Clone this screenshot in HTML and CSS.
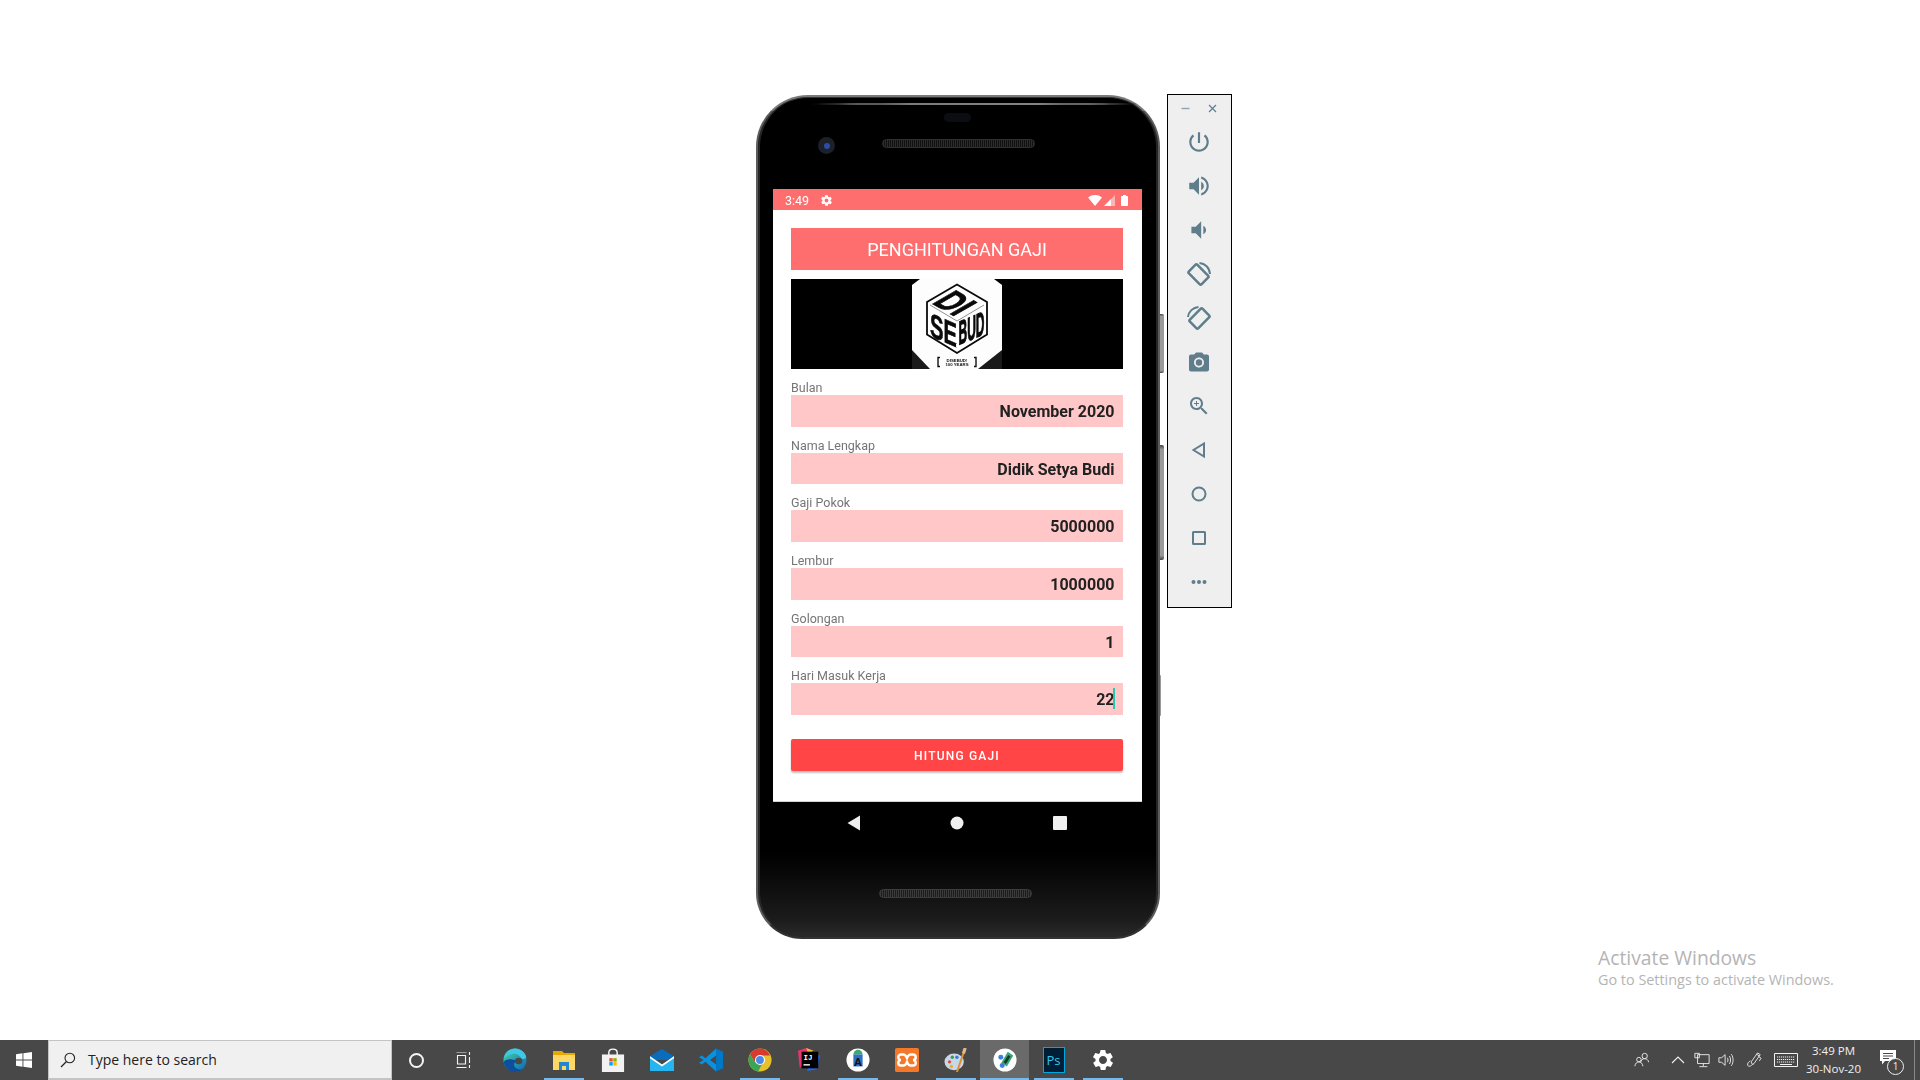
FILE: index.html
```html
<!DOCTYPE html>
<html lang="id">
<head>
<meta charset="utf-8">
<title>Penghitungan Gaji</title>
<link rel="stylesheet" href="styles.css">
</head>
<body>
<main class="desktop">
  <section class="phone">
    <span class="btn-side btn-a"></span><span class="btn-side btn-b"></span><span class="btn-side btn-c"></span>
    <div class="bezel-top">
      <span class="highlight"></span>
      <span class="sensor"></span>
      <span class="camera"><span class="lens"></span></span>
      <span class="speaker speaker-top"></span>
    </div>
    <div class="screen">
      <div class="statusbar">
        <span class="clock-mini">3:49</span>
        <svg class="gear-mini" viewBox="0 0 24 24"><path fill="#fff" d="M19.4 13c.1-.3.1-.6.1-1s0-.7-.1-1l2.100-1.600c.2-.2.2-.4.1-.6l-2-3.500c-.1-.2-.4-.3-.6-.2l-2.500 1c-.5-.4-1.100-.7-1.700-1l-.4-2.600c0-.2-.2-.4-.5-.4h-4c-.3 0-.5.2-.5.400l-.4 2.600c-.6.3-1.200.6-1.700 1l-2.500-1c-.2-.1-.5 0-.6.2l-2 3.500c-.1.200-.1.400.1.600L4.600 11c-.1.300-.1.700-.1 1s0 .7.1 1l-2.100 1.600c-.2.200-.2.400-.1.600l2 3.500c.1.200.4.300.6.200l2.500-1c.5.400 1.100.7 1.700 1l.4 2.600c0 .2.2.4.5.4h4c.3 0 .5-.2.5-.4l.4-2.600c.6-.3 1.200-.6 1.700-1l2.500 1c.2.100.5 0 .6-.2l2-3.500c.1-.2.1-.4-.1-.6L19.400 13zM12 15.500c-1.900 0-3.500-1.600-3.500-3.500s1.600-3.500 3.500-3.500 3.500 1.600 3.500 3.500-1.600 3.500-3.500 3.500z"/></svg>
        <span class="status-right">
          <svg class="st-wifi" viewBox="0 0 14 11"><path fill="#fff" d="M0 2.500C2 .8 4.400 0 7 0s5 .8 7 2.500L7 11z"/></svg>
          <svg class="st-signal" viewBox="0 0 11 11"><path fill="#ffb4b4" d="M11 0v11H0z"/><path fill="#fff" d="M7 4v7H0z"/></svg>
          <svg class="st-batt" viewBox="0 0 7 11"><path fill="#fff" d="M2 0h3v1h1.200c.4 0 .8.300.8.800v8.400c0 .4-.4.800-.8.800H.800C.4 11 0 10.600 0 10.200V1.800C0 1.300.4 1 .8 1H2z"/></svg>
        </span>
      </div>
      <div class="content">
        <h1 class="title">PENGHITUNGAN GAJI</h1>
        <div class="banner">
          <svg class="logo" viewBox="0 0 90 90">
            <rect width="90" height="90" fill="#1a1a1a"/>
            <polygon points="0,0 8,0 0,6" fill="#000"/>
            <polygon points="90,0 82,0 90,6" fill="#000"/>
            <polygon points="8,0 82,0 90,6 90,71 66,90 18,90 0,71 0,6" fill="#fdfdfd"/>
            <polygon points="45,5.500 75,23 75,55.500 45,74 15,55.500 15,23" fill="#fff" stroke="#0a0a0a" stroke-width="1.800"/>
            <path d="M18 26L45 42 72 26" fill="none" stroke="#444" stroke-width=".6"/>
            <text class="logo-di" transform="matrix(1.220,.7,-1.700,.98,19,24)" x="0" y="0">DI</text>
            <text class="logo-se" transform="matrix(.78,.33,0,1.290,18,57)" x="0" y="0">SE</text>
            <text class="logo-bud" transform="matrix(.48,-.2,0,1.340,46.500,66)" x="0" y="0">BUD</text>
            <path d="M45 47v3M45 53v3M45 59v3M45 65v3" stroke="#fff" stroke-width="1.800"/>
            <path d="M28 78.500h-2v9h2M62 78.500h2v9h-2" fill="none" stroke="#111" stroke-width="1.400"/>
            <text class="logo-cap" x="45" y="82.500">DISEBUD!</text>
            <text class="logo-cap" x="45" y="87">100 YEARS</text>
          </svg>
        </div>
        <div class="field-group">
          <label class="field-label">Bulan</label>
          <div class="field">November 2020</div>
        </div>
        <div class="field-group">
          <label class="field-label">Nama Lengkap</label>
          <div class="field">Didik Setya Budi</div>
        </div>
        <div class="field-group">
          <label class="field-label">Gaji Pokok</label>
          <div class="field">5000000</div>
        </div>
        <div class="field-group">
          <label class="field-label">Lembur</label>
          <div class="field">1000000</div>
        </div>
        <div class="field-group">
          <label class="field-label">Golongan</label>
          <div class="field">1</div>
        </div>
        <div class="field-group">
          <label class="field-label">Hari Masuk Kerja</label>
          <div class="field">22<span class="caret"></span></div>
        </div>
        <button class="primary">HITUNG GAJI</button>
      </div>
    </div>
    <nav class="navbar">
      <svg class="nav-ico" viewBox="0 0 16 16"><path fill="#f0f0f0" d="M14 .5v15L1.500 8z"/></svg>
      <svg class="nav-ico" viewBox="0 0 16 16"><circle cx="8" cy="8" r="6.500" fill="#f0f0f0"/></svg>
      <svg class="nav-ico" viewBox="0 0 16 16"><rect x="1" y="1" width="14" height="14" rx="1" fill="#f0f0f0"/></svg>
    </nav>
    <div class="bezel-bottom"><span class="speaker speaker-bottom"></span></div>
  </section>

  <aside class="emu-panel">
    <div class="emu-head">
      <svg class="emu-min" viewBox="0 0 9 9"><path stroke="#90a4ae" stroke-width="1.400" d="M.5 4.500h8"/></svg>
      <svg class="emu-close" viewBox="0 0 9 9"><path stroke="#607d8b" stroke-width="1.200" fill="none" d="M1 1l7 7M8 1L1 8"/></svg>
    </div>
    <div class="emu-btn big"><svg viewBox="0 0 24 24"><path d="M13 3h-2v10h2V3zm4.830 2.170l-1.420 1.420C17.990 7.860 19 9.810 19 12c0 3.870-3.130 7-7 7s-7-3.130-7-7c0-2.190 1.010-4.140 2.580-5.420L6.170 5.170C4.230 6.820 3 9.260 3 12c0 4.970 4.030 9 9 9s9-4.030 9-9c0-2.740-1.230-5.180-3.170-6.830z"/></svg></div>
    <div class="emu-btn big"><svg viewBox="0 0 24 24"><path d="M3 9v6h4l5 5V4L7 9H3zm13.500 3c0-1.770-1.020-3.290-2.500-4.030v8.050c1.480-.73 2.500-2.250 2.500-4.020zM14 3.230v2.060c2.890.86 5 3.540 5 6.710s-2.110 5.850-5 6.710v2.060c4.010-.91 7-4.490 7-8.770s-2.990-7.860-7-8.770z"/></svg></div>
    <div class="emu-btn big"><svg viewBox="0 0 24 24"><path d="M18.500 12c0-1.770-1.020-3.290-2.500-4.030v8.050c1.480-.73 2.500-2.250 2.500-4.020zM5 9v6h4l5 5V4L9 9H5z"/></svg></div>
    <div class="emu-btn"><svg viewBox="0 0 24 24"><rect class="ln thick" x="2.500" y="6.500" width="18" height="12" rx="1.500" transform="rotate(45 11.500 12.500)"/><path class="ln" d="M12.500 1c5.500.5 10 4.500 10.500 11"/></svg></div>
    <div class="emu-btn"><svg viewBox="0 0 24 24"><rect class="ln thick" x="3.500" y="6.500" width="18" height="12" rx="1.500" transform="rotate(-45 12.500 12.500)"/><path class="ln" d="M11.500 1C6 1.500 1.500 5.500 1 11"/></svg></div>
    <div class="emu-btn"><svg viewBox="0 0 24 24"><circle cx="12" cy="12.500" r="3.200"/><path d="M9 2.500L7.170 4.500H4c-1.100 0-2 .9-2 2v13c0 1.100.9 2 2 2h16c1.100 0 2-.9 2-2v-13c0-1.100-.9-2-2-2h-3.170L15 2.500H9zm3 15c-2.760 0-5-2.240-5-5s2.240-5 5-5 5 2.240 5 5-2.240 5-5 5z"/></svg></div>
    <div class="emu-btn"><svg viewBox="0 0 24 24"><path d="M15.500 14h-.79l-.28-.27C15.410 12.590 16 11.110 16 9.500 16 5.910 13.090 3 9.500 3S3 5.910 3 9.500 5.910 16 9.500 16c1.610 0 3.090-.59 4.230-1.570l.27.280v.79l5 4.990L20.490 19l-4.990-5zm-6 0C7.010 14 5 11.990 5 9.500S7.010 5 9.500 5 14 7.010 14 9.500 11.990 14 9.500 14z"/><path d="M12 10h-2v2H9v-2H7V9h2V7h1v2h2v1z"/></svg></div>
    <div class="emu-btn"><svg viewBox="0 0 24 24"><path class="ln" d="M17 5.500v13L6.500 12z"/></svg></div>
    <div class="emu-btn"><svg viewBox="0 0 24 24"><circle class="ln" cx="12" cy="12" r="6.500"/></svg></div>
    <div class="emu-btn"><svg viewBox="0 0 24 24"><rect class="ln" x="6" y="6" width="12" height="12" rx=".5"/></svg></div>
    <div class="emu-btn"><svg viewBox="0 0 24 24"><circle cx="6.500" cy="12" r="2"/><circle cx="12" cy="12" r="2"/><circle cx="17.500" cy="12" r="2"/></svg></div>
  </aside>

  <div class="watermark">
    <div class="wm-title">Activate Windows</div>
    <div class="wm-sub">Go to Settings to activate Windows.</div>
  </div>
</main>

<footer class="taskbar">
  <div class="start"><svg class="win" viewBox="0 0 16 16"><path fill="#fff" d="M0 2.200L6.500 1.300v6.200H0zM7.400 1.200L16 0v7.500H7.400zM0 8.500h6.500v6.200L0 13.800zM7.400 8.500H16V16l-8.600-1.200z"/></svg></div>
  <div class="search">
    <svg class="search-ico" viewBox="0 0 16 16"><circle cx="9.800" cy="6" r="4.800" fill="none" stroke="#222" stroke-width="1.100"/><path stroke="#222" stroke-width="1.300" d="M6.500 9.500L1 15"/></svg>
    <span class="search-text">Type here to search</span>
  </div>
  <div class="sys-btn"><span class="cortana"></span></div>
  <div class="sys-btn"><svg class="tv" viewBox="0 0 16 16"><path fill="none" stroke="#f4f4f4" stroke-width="1.100" d="M.5 0h10M.5 15.500h10M1.500 3.500h8v8.500h-8zM13.500 0v3M13.500 5v6M13.500 13v3"/></svg></div>

  <div class="apps">
    <div class="app"><svg viewBox="0 0 26 26"><defs><linearGradient id="eg" x1="0" y1="0" x2="1" y2="1"><stop offset="0" stop-color="#4cd3a0"/><stop offset="1" stop-color="#0a66b8"/></linearGradient></defs><circle cx="13" cy="13" r="12.500" fill="url(#eg)"/><path fill="#0b4f9e" d="M1 15c0 6 6 11 12 11 3 0 6-1 8-3-5 1-9-1-9-5 0-2 1-3 3-4-6-3-13-2-14 1z"/><ellipse cx="17" cy="14" rx="4" ry="3.500" fill="#484848"/><path fill="#3ec8e8" d="M1 11C3 4 8 .5 13 .5c6 0 11 4 12 9 .2 2-2 3-5 2-2-4-6-6-10-5-4 1-7 3-9 4.500z"/></svg></div>
    <div class="app is-open"><svg viewBox="0 0 24 24"><path fill="#e8a800" d="M1 3h9l2 2h11v5H1z"/><path fill="#ffd766" d="M1 7h22v15H1z"/><path fill="#1e88d4" d="M7 14h10v8h-3v-4h-4v4H7z"/></svg></div>
    <div class="app"><svg viewBox="0 0 24 26"><path fill="none" stroke="#fff" stroke-width="1.500" d="M7.500 8V5c0-5 9-5 9 0v3"/><path fill="#f2f2f2" d="M0 7h24v19H0z"/><path fill="#f25022" d="M8 11h3.700v3.700H8z"/><path fill="#7fba00" d="M12.300 11H16v3.700h-3.700z"/><path fill="#00a4ef" d="M8 15.300h3.700V19H8z"/><path fill="#ffb900" d="M12.300 15.300H16V19h-3.700z"/></svg></div>
    <div class="app"><svg viewBox="0 0 26 26"><path fill="#0a6cbf" d="M0 9L13 1l13 8v4H0z"/><path fill="#27b5f0" d="M0 9l13 9 13-9v16H0z"/><path fill="#fff" d="M0 9l13 9 13-9v2L13 20 0 11z"/></svg></div>
    <div class="app"><svg viewBox="0 0 26 26"><path fill="#0078c8" d="M18.500.5L26 4v18l-7.500 3.500z"/><path fill="#0a91e0" d="M18.500.5v25L7 15l-4 3-3-2 5-3-5-3 3-2 4 3z"/><path fill="#484848" d="M18.500 8l-6.600 5 6.600 5z"/></svg></div>
    <div class="app is-open"><svg viewBox="0 0 26 26"><circle cx="13" cy="13" r="12.500" fill="#e8c02a"/><path fill="#d83a2e" d="M13 .5a12.500 12.500 0 0 0-10.800 6.200L8 16l5-8h10.800A12.500 12.500 0 0 0 13 .5z"/><path fill="#3aa655" d="M2.200 6.700A12.500 12.500 0 0 0 11 25.400L16 16H8z"/><circle cx="13" cy="13" r="5.500" fill="#fff"/><circle cx="13" cy="13" r="4.300" fill="#4a88ea"/></svg></div>
    <div class="app"><svg viewBox="0 0 26 26"><path fill="#e8336e" d="M1 3l9-3 7 4-14 18z"/><path fill="#f7b731" d="M10 0l8 3-6 3z"/><path fill="#2a66e0" d="M25 8l-3 15-11 2 6-19z"/><rect x="5" y="4" width="18" height="18" fill="#000"/><text class="ij" x="7" y="13">IJ</text><rect x="7" y="17.500" width="7" height="1.500" fill="#fff"/></svg></div>
    <div class="app is-open split"><svg viewBox="0 0 26 26"><circle cx="13" cy="13" r="12.500" fill="#fff"/><path fill="#3aaa6e" d="M8 7a5 5 0 0 1 10 0z"/><rect x="8" y="7" width="10" height="13" fill="#2f6fc4"/><text class="as" x="13" y="19">A</text></svg></div>
    <div class="app"><svg viewBox="0 0 26 26"><rect width="26" height="26" rx="2" fill="#f5782a"/><path fill="none" stroke="#fff" stroke-width="2.600" d="M9 7H6.500a2.500 2.500 0 0 0 0 6 2.500 2.500 0 0 0 0 6H9c2.500 0 3-2 4-4 1 2 1.500 4 4 4h2.500a2.500 2.500 0 0 0 0-6 2.500 2.500 0 0 0 0-6H17c-2.500 0-3 2-4 4-1-2-1.500-4-4-4z"/></svg></div>
    <div class="app is-open"><svg viewBox="0 0 26 26"><ellipse cx="11" cy="15" rx="10.500" ry="9" fill="#c8d8e8"/><circle cx="6" cy="15" r="1.800" fill="#e04a3a"/><circle cx="9" cy="10" r="1.800" fill="#3a9a4a"/><circle cx="14" cy="10" r="1.800" fill="#3a78d8"/><circle cx="8" cy="20" r="1.800" fill="#e8b020"/><path stroke="#d8923a" stroke-width="2.200" d="M22 3L14 26"/><path stroke="#e8b888" stroke-width="3.400" d="M23 0l-2 6"/></svg></div>
    <div class="app is-active is-open"><svg viewBox="0 0 26 26"><circle cx="13" cy="13" r="12.500" fill="#fff"/><path fill="#3aa87a" d="M16 4l6 4-7 12-6-4z"/><path fill="#193a2c" d="M16.500 7.500l2.500 1.700-5 8-2.500-1.700z"/><circle cx="8.500" cy="10" r="2.700" fill="#3f7fe0"/><circle cx="10" cy="19" r="2.700" fill="#3f7fe0"/></svg></div>
    <div class="app is-open"><div class="ps">Ps</div></div>
    <div class="app is-open"><svg viewBox="0 0 24 24"><path fill="#fff" d="M19.400 13c.1-.3.1-.6.1-1s0-.7-.1-1l2.100-1.600c.2-.2.2-.4.1-.6l-2-3.500c-.1-.2-.4-.3-.6-.2l-2.500 1c-.5-.4-1.100-.7-1.700-1l-.4-2.600c0-.2-.2-.4-.5-.4h-4c-.3 0-.5.2-.5.400l-.4 2.600c-.6.3-1.200.6-1.700 1l-2.500-1c-.2-.1-.5 0-.6.2l-2 3.500c-.1.200-.1.400.1.600L4.600 11c-.1.300-.1.700-.1 1s0 .7.1 1l-2.100 1.600c-.2.200-.2.400-.1.600l2 3.500c.1.200.4.300.6.200l2.500-1c.5.400 1.100.7 1.700 1l.4 2.600c0 .2.2.4.5.4h4c.3 0 .5-.2.5-.4l.4-2.600c.6-.3 1.200-.6 1.700-1l2.500 1c.2.100.5 0 .6-.2l2-3.500c.1-.2.1-.4-.1-.6L19.400 13zM12 16c-2.200 0-4-1.800-4-4s1.800-4 4-4 4 1.800 4 4-1.800 4-4 4z"/></svg></div>
  </div>

  <div class="tray">
    <div class="tray-item w32"><svg viewBox="0 0 18 18"><g fill="none" stroke="#f2f2f2" stroke-width="1"><circle cx="12" cy="4.500" r="3"/><path d="M7.500 12c.5-3 2-4.500 4.500-4.500s4 1.500 4.500 4"/><circle cx="5.500" cy="8.500" r="2.500"/><path d="M1 16c.3-3 2-4.800 4.500-4.800S9.500 13 10 16"/></g></svg></div>
    <div class="tray-item w24 ml8"><svg viewBox="0 0 16 16"><path fill="none" stroke="#f2f2f2" stroke-width="1.100" d="M2 11l6-6 6 6"/></svg></div>
    <div class="tray-item w24"><svg viewBox="0 0 18 18"><path fill="none" stroke="#f2f2f2" stroke-width="1" d="M4 3h13v10H4zM10.500 13v3M6 16.500h9M1 1.500h5v5H1z"/></svg></div>
    <div class="tray-item w24"><svg viewBox="0 0 18 18"><path fill="none" stroke="#f2f2f2" stroke-width="1" d="M1 6.500h3L8 3v12l-4-3.500H1zM10.500 6.500c1 1.500 1 3.500 0 5M12.800 4.500c1.800 2.500 1.800 6.500 0 9M15 2.500c2.600 3.800 2.600 9.200 0 13"/></svg></div>
    <div class="tray-item w24 ml4"><svg viewBox="0 0 18 18"><path fill="none" stroke="#f2f2f2" stroke-width="1" d="M6 11l7-10 3 2-7 10c-1 1.500-3 1-3-2zM12 2.500l3 2M8 13c-2 3-5 4-6 2s1-4 3-5M14 5l3 2-2 3"/></svg></div>
    <div class="tray-item w32 ml4"><svg class="kbd" viewBox="0 0 24 14"><path fill="none" stroke="#f2f2f2" stroke-width="1" d="M.5.500h23v13H.5z"/><path stroke="#f2f2f2" stroke-width="1.200" stroke-dasharray="1.200 .8" d="M3 4h18M3 6.500h18M3 9h18"/><path stroke="#f2f2f2" d="M6 11.500h12"/></svg></div>
    <div class="tray-clock"><span>3:49 PM</span><span>30-Nov-20</span></div>
    <div class="tray-notify">
      <svg class="bubble" viewBox="0 0 16 15"><path fill="#fff" d="M0 0h16v11H5l-3 3.500V11H0z"/><path stroke="#484848" d="M3 3.500h10M3 6h10M3 8.500h6"/></svg>
      <span class="badge">1</span>
    </div>
  </div>
</footer>
</body>
</html>
```

FILE: styles.css
```css
* { box-sizing: border-box; }
html, body { margin: 0; padding: 0; height: 100%; }
body {
  width: 1920px;
  height: 1080px;
  overflow: hidden;
  background: #fff;
  display: flex;
  flex-direction: column;
  font-family: Roboto, "Liberation Sans", sans-serif;
}

.desktop { position: relative; flex: 1; background: #fff; }

/* phone */
.phone {
  position: absolute;
  left: 756px;
  top: 95px;
  width: 404px;
  height: 844px;
  display: flex;
  flex-direction: column;
  align-items: center;
  padding-right: 1px;
  border-radius: 52px 52px 46px 46px;
  background: linear-gradient(#000 90%, #1c1c1c 98%, #2a2a2a);
  border-top: 2px solid #7a7a7a;
  border-left: 2px solid #5c5c5c;
  border-right: 2px solid #5c5c5c;
  border-bottom: 2px solid #333;
  box-shadow: inset 2px 0 0 #262626, inset -2px 0 0 #262626, inset 0 1px 0 #333;
}
.btn-side { position: absolute; right: -6px; width: 4px; background: linear-gradient(#444, #999 4%, #999 96%, #444); border-radius: 0 2px 2px 0; }
.btn-a { top: 217px; height: 59px; }
.btn-b { top: 348px; height: 115px; }
.btn-c { top: 578px; height: 41px; width: 1px; right: -3px; background: #999; }

.bezel-top { position: relative; width: 100%; height: 92px; flex: none; }
.highlight { position: absolute; left: 52px; right: 20px; top: 6px; height: 2px; border-radius: 50%; background: linear-gradient(90deg, #000, #777 12%, #888 90%, #000); }
.sensor { position: absolute; left: 186px; top: 16px; width: 27px; height: 9px; border-radius: 5px; background: #0b0d12; }
.camera { position: absolute; left: 60px; top: 40px; width: 17px; height: 17px; border-radius: 50%; background: #1c2028; display: flex; align-items: center; justify-content: center; }
.lens { width: 6px; height: 6px; border-radius: 50%; background: #2b4da8; }
.speaker { display: block; height: 9px; border-radius: 5px; background: repeating-linear-gradient(90deg, #2c2c2c 0 1px, #111 1px 2px); border: 1px solid #303030; }
.speaker-top { position: absolute; left: 124px; top: 42px; width: 153px; }

/* screen */
.screen { width: 369px; height: 613px; flex: none; background: #fff; display: flex; flex-direction: column; border-bottom: 1px solid #d4d4d4; filter: blur(.3px); }
.statusbar { height: 21px; flex: none; background: #ff6e6e; display: flex; align-items: center; padding: 2px 14px 0 12px; color: #fff; }
.clock-mini { font-size: 12.500px; line-height: 19px; }
.gear-mini { width: 13px; height: 13px; margin-left: 11px; }
.status-right { margin-left: auto; display: flex; align-items: center; gap: 2px; }
.st-wifi { width: 14px; height: 11px; }
.st-signal { width: 11px; height: 11px; margin-right: 4px; }
.st-batt { width: 7px; height: 11px; }

.content { padding: 18px 19px 0 18px; display: flex; flex-direction: column; }
.title { margin: 0; height: 42px; background: #ff6e6e; color: #fff; font-size: 18px; font-weight: 400; line-height: 44px; text-align: center; }
.banner { margin-top: 9px; height: 90px; background: #000; display: flex; justify-content: center; }
.logo { width: 90px; height: 90px; display: block; margin-left: -1px; }
.logo-di, .logo-se, .logo-bud { fill: #0a0a0a; stroke: #0a0a0a; stroke-width: .5; }
.logo-di { font: 700 20px "Liberation Sans", sans-serif; }
.logo-se { font: 700 26px "Liberation Sans", sans-serif; }
.logo-bud { font: 700 25px "Liberation Sans", sans-serif; stroke-width: .9; }
.logo-cap { font: 700 4.300px "Liberation Sans", sans-serif; fill: #111; text-anchor: middle; }

.field-label { display: block; height: 26px; padding-top: 12px; font-size: 12.500px; line-height: 14px; color: #757575; }
.field {
  height: 31.67px;
  background: #ffc7c7;
  color: #212121;
  font-size: 16px;
  font-weight: 700;
  line-height: 34px;
  text-align: right;
  padding-right: 8.500px;
  position: relative;
}
.caret { position: absolute; right: 8.500px; top: 5px; width: 1.500px; height: 21px; background: #26c6b0; }
.primary {
  margin-top: 24px;
  height: 32px;
  border: 0;
  border-radius: 2px;
  background: #ff4545;
  color: #fff;
  font: 500 12px Roboto, sans-serif;
  letter-spacing: 1.200px;
  box-shadow: 0 2px 2px rgba(0, 0, 0, .25);
  padding: 2px 0 0;
}

.navbar { width: 369px; height: 42px; flex: none; display: grid; grid-template-columns: repeat(3, 103px); padding-left: 29px; align-items: center; justify-items: center; }
.nav-ico { width: 16px; height: 16px; }
.bezel-bottom { flex: 1; width: 100%; padding: 45px 0 0 121px; }
.speaker-bottom { width: 153px; background: repeating-linear-gradient(90deg, #3a3a3a 0 1px, #1c1c1c 1px 2px); border-color: #3c3c3c; }

/* emulator side panel */
.emu-panel { position: absolute; left: 1167px; top: 94px; width: 65px; height: 514px; background: #efefef; border: 1px solid #000; display: flex; flex-direction: column; align-items: center; }
.emu-head { height: 25px; width: 100%; flex: none; display: flex; align-items: center; justify-content: space-between; padding: 2px 14px 0 13px; }
.emu-min, .emu-close { width: 9px; height: 9px; }
.emu-btn { height: 44px; width: 100%; flex: none; display: flex; align-items: center; justify-content: center; padding-right: 1px; }
.emu-btn svg { width: 24px; height: 24px; fill: #5f7d8b; overflow: visible; }
.emu-btn.big svg { width: 26px; height: 26px; }
.emu-btn .ln { fill: none; stroke: #5f7d8b; stroke-width: 2; }
.emu-btn .thick { stroke-width: 2.500; }

/* watermark */
.watermark { position: absolute; left: 1598px; top: 946px; color: #b4b4b4; font-family: "Open Sans", "Noto Sans", sans-serif; }
.wm-title { font-size: 19.300px; line-height: 24px; }
.wm-sub { font-size: 14.400px; line-height: 20px; }

/* taskbar */
.taskbar { height: 40px; flex: none; background: #484848; display: flex; align-items: stretch; color: #fff; font-family: "Open Sans", "Noto Sans", sans-serif; }
.start { width: 48px; flex: none; display: flex; align-items: center; justify-content: center; }
.win { width: 16px; height: 16px; }
.search { width: 344px; flex: none; background: #f0f0f0; border-top: 1px solid #c4c4c4; border-bottom: 2px solid #c4c4c4; border-left: 1px solid #c4c4c4; border-right: 1px solid #c4c4c4; display: flex; align-items: center; padding-left: 11px; color: #222; }
.search-ico { width: 16px; height: 16px; }
.search-text { margin-left: 12px; font-size: 14px; }
.sys-btn { width: 48px; flex: none; display: flex; align-items: center; justify-content: center; }
.cortana { width: 15px; height: 15px; border-radius: 50%; border: 2px solid #f4f4f4; }
.tv { width: 16px; height: 16px; }
.apps { margin-left: 2px; display: flex; }
.app { width: 49px; height: 40px; flex: none; position: relative; display: flex; align-items: center; justify-content: center; }
.app svg { width: 24px; height: 24px; }
.app.is-open::after { content: ""; position: absolute; left: 5px; bottom: 0; width: 40px; height: 2px; background: #76b9ed; }
.app.is-active { background: #6a6a6a; }
.app.is-active::after { left: 0; width: 49px; }
.ij { font: 700 8px "Liberation Mono", monospace; fill: #fff; }
.as { font: 700 12px "Liberation Sans", sans-serif; fill: #111; text-anchor: middle; }
.ps { width: 22px; height: 26px; background: #001e36; border: 1px solid #00a8e0; color: #31c5f0; font: 400 13px/24px "Open Sans", sans-serif; text-align: center; }

.tray { margin-left: auto; padding-right: 5px; display: flex; align-items: stretch; }
.tray-item { display: flex; align-items: center; justify-content: center; }
.tray-item svg { width: 16px; height: 16px; }
.tray-item .kbd { width: 24px; height: 14px; }
.w32 { width: 32px; }
.w24 { width: 24px; }
.ml8 { margin-left: 8px; }
.ml4 { margin-left: 4px; }
.tray-clock { width: 63px; display: flex; flex-direction: column; align-items: center; justify-content: center; font-size: 11.500px; line-height: 18px; color: #f0f0f0; white-space: nowrap; }
.tray-notify { width: 48px; margin-left: 2px; position: relative; border-right: 1px solid #888; display: flex; align-items: center; justify-content: center; padding: 0 6px 6px 0; }
.bubble { width: 16px; height: 15px; }
.badge { position: absolute; left: 20px; top: 18px; width: 17px; height: 17px; border-radius: 50%; background: #484848; border: 1px solid #f0f0f0; color: #f0f0f0; font-size: 10px; line-height: 15px; text-align: center; }
```
